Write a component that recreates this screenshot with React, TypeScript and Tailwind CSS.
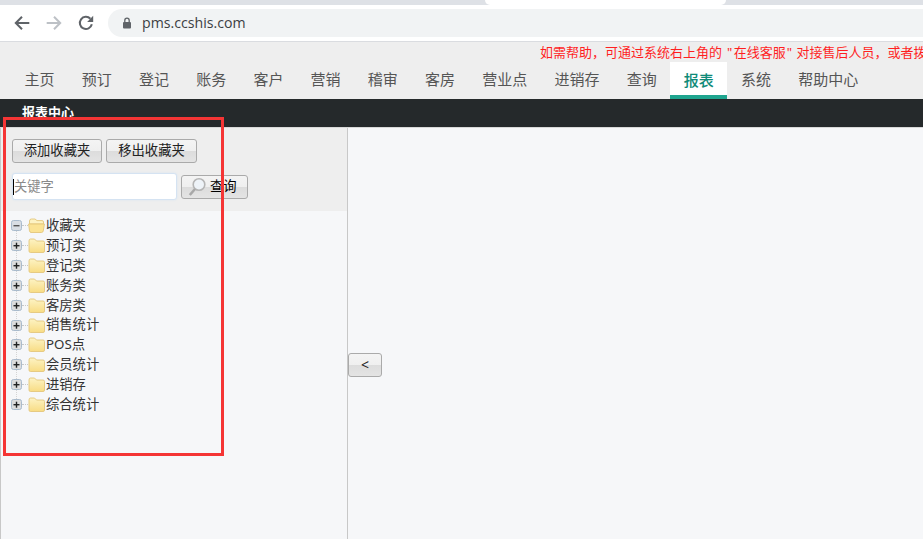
import React from "react";

const cjk = "font-['Noto_Sans','Noto_Sans_CJK_SC',sans-serif]";

const tabs = ["主页", "预订", "登记", "账务", "客户", "营销", "稽审", "客房", "营业点", "进销存", "查询", "报表", "系统", "帮助中心"];
const tree = ["预订类", "登记类", "账务类", "客房类", "销售统计", "POS点", "会员统计", "进销存", "综合统计"];

function Box({ open }: { open?: boolean }) {
  return (
    <svg width="11" height="11" viewBox="0 0 11 11" className="relative shrink-0">
      <rect x="0.5" y="0.5" width="10" height="10" rx="2" fill={open ? "#d8dde3" : "#dcdcdc"} stroke="#a9bbcd" />
      <rect x="2.5" y="5" width="6" height="1.4" fill={open ? "#555" : "#222"} />
      {!open && <rect x="4.8" y="2.7" width="1.4" height="6" fill="#222" />}
    </svg>
  );
}

function Folder({ open }: { open?: boolean }) {
  return open ? (
    <svg width="17" height="15" viewBox="0 0 17 15" className="shrink-0">
      <path d="M1.5 3 Q1.5 1 3.5 1 H7 L9 2.6 H14 Q15.5 2.6 15.5 4 V6 H1.5 Z" fill="#fdf3c4" stroke="#e3c67c" strokeWidth="0.9" />
      <path d="M0.6 6 H16.4 L15.3 12.8 Q15 14.5 13.5 14.5 H3 Q1.8 14.5 1.5 12.8 Z" fill="#fbe394" stroke="#e3c67c" strokeWidth="0.9" />
    </svg>
  ) : (
    <svg width="17" height="15" viewBox="0 0 17 15" className="shrink-0">
      <defs>
        <linearGradient id="fg" x1="0" y1="0" x2="0" y2="1">
          <stop offset="0" stopColor="#fdf3c4" />
          <stop offset="1" stopColor="#f8dc84" />
        </linearGradient>
      </defs>
      <path d="M1 3 Q1 1 2.5 1 H6.5 L8.5 3 H15 Q16.5 3 16.5 4.5 V13 Q16.5 14.5 15 14.5 H2.5 Q1 14.5 1 13 Z" fill="url(#fg)" stroke="#e3c67c" strokeWidth="0.9" />
    </svg>
  );
}

function Row({ label, open, last }: { label: string; open?: boolean; last?: boolean }) {
  return (
    <div className="relative flex h-[19.85px] items-center">
      {!last && <span className="absolute left-[5px] top-[10px] h-[20px] border-l border-dotted border-[#d4d4d4]" />}
      <Box open={open} />
      <span className="h-px w-[6px] border-t border-dotted border-[#c8c8c8]" />
      <Folder open={open} />
      <span className="ml-px text-[13.3px] leading-none text-[#333]">{label}</span>
    </div>
  );
}

const btn =
  "h-6 rounded-[3px] border border-[#aaa] bg-[linear-gradient(#f4f4f4_0%,#efefef_50%,#dcdcdc_50%,#e4e4e4_100%)] text-[13.3px] leading-none text-[#222]";

export default function App() {
  return (
    <div className={`relative flex h-[539px] w-[923px] flex-col overflow-hidden bg-[#f6f7f9] ${cjk}`}>
      {/* browser tab strip */}
      <div className="flex h-[5px] bg-[#dee1e6]">
        <div className="ml-[485px] w-[241px] rounded-b-lg bg-white" />
      </div>
      {/* browser toolbar */}
      <div className="flex h-[37px] items-center border-b border-[#dadce0] bg-white pb-px">
        <svg width="18" height="18" viewBox="0 0 16 16" className="ml-[13px]">
          <path d="M14.5 8H2.5M8 2.5 2.5 8 8 13.5" fill="none" stroke="#5f6368" strokeWidth="1.8" />
        </svg>
        <svg width="18" height="18" viewBox="0 0 16 16" className="ml-[14px]">
          <path d="M1.5 8H13.5M8 2.5 13.5 8 8 13.5" fill="none" stroke="#bdc1c6" strokeWidth="1.8" />
        </svg>
        <svg width="18" height="18" viewBox="0 0 16 16" className="ml-[14px]">
          <path d="M13.2 9.2A5.4 5.4 0 1 1 11.9 4.2" fill="none" stroke="#5f6368" strokeWidth="1.8" />
          <path d="M14.4 1.6V7H9Z" fill="#5f6368" />
        </svg>
        <div className="ml-[13px] flex h-[28px] flex-1 items-center rounded-l-full bg-[#f1f3f4] pl-[14px]">
          <svg width="10" height="12" viewBox="0 0 10 12">
            <rect x="1" y="5" width="8" height="6.5" rx="1" fill="#5f6368" />
            <path d="M2.8 5V3.4A2.2 2.2 0 0 1 7.2 3.4V5" fill="none" stroke="#5f6368" strokeWidth="1.3" />
          </svg>
          <span className="ml-[10px] font-['Open_Sans',sans-serif] text-[14.15px] text-[#3c4043]">pms.ccshis.com</span>
        </div>
      </div>
      {/* notice and nav */}
      <div className="flex h-[57px] flex-col bg-[#eeeeee]">
        <div className="flex h-5 items-center overflow-hidden whitespace-nowrap pl-[540px] text-[13px] leading-none text-[#ff1f1f]">
          <span>如需帮助，可通过系统右上角的&nbsp;</span>
          <span className="mx-[1.5px]">"</span>
          <span>在线客服</span>
          <span className="mx-[1px]">"</span>
          <span>&nbsp;对接售后人员，或者拨打电话</span>
        </div>
        <div className="flex h-[37px] pl-[11px]">
          {tabs.map((t) =>
            t === "报表" ? (
              <div key={t} className="flex h-[37px] items-center border-b-4 border-[#1fa58f] bg-white px-[13.6px] pt-[3px] text-[15px] font-medium leading-none text-[#0f8a78]">
                {t}
              </div>
            ) : (
              <div key={t} className="flex items-center px-[13.6px] pb-[2px] text-[15px] leading-none text-[#555]">
                {t}
              </div>
            ),
          )}
        </div>
      </div>
      {/* title bar */}
      <div className="flex h-[28px] items-end bg-[#25292b] pl-[22px] text-[13px] font-bold leading-[21px] text-white">
        <span className="translate-y-[-4px]">报表中心</span>
      </div>
      {/* body */}
      <div className="flex flex-1 items-stretch border-t border-[#d8d8d8]">
        <div className="flex w-[348px] flex-col border-x border-[#c8c8c8]">
          <div className="flex h-[83px] flex-col bg-[#eeeeee] pl-[11px] pt-[11px]">
            <div className="flex gap-1">
              <button className={`${btn} w-[90px]`}>添加收藏夹</button>
              <button className={`${btn} w-[91px]`}>移出收藏夹</button>
            </div>
            <div className="mt-[10px] flex items-center gap-1">
              <div className="flex h-[27px] w-[165px] items-center rounded-[3px] border border-[#d5e3f2] bg-white text-[13.3px] leading-none text-[#8a8a8a] shadow-[0_0_2px_#d5e3f2]">
                <span className="h-4 w-px bg-black" />
                关键字
              </div>
              <button className={`${btn} flex w-[67px] items-center pl-[6px]`}>
                <svg width="18" height="20" viewBox="0 0 18 20" className="shrink-0">
                  <circle cx="11" cy="7.5" r="5.8" fill="#eef3f8" stroke="#b5b5b5" strokeWidth="1.6" />
                  <path d="M7 12 1.8 18" stroke="#a8a8a8" strokeWidth="2.6" />
                </svg>
                <span className="ml-[4px] text-black">查询</span>
              </button>
            </div>
          </div>
          <div className="flex flex-col pl-[10px] pt-[5px]">
            <Row label="收藏夹" open />
            {tree.map((t, i) => (
              <Row key={t} label={t} last={i === tree.length - 1} />
            ))}
          </div>
        </div>
        <div className="flex flex-1 items-start pt-[225px]">
          <button className={`${btn} w-[34px] text-[14px]`}>&lt;</button>
        </div>
      </div>
      {/* annotation rectangle drawn over the screenshot */}
      <div className="absolute left-[3px] top-[117px] h-[339px] w-[221px] border-[3px] border-[#f53535]" />
    </div>
  );
}
